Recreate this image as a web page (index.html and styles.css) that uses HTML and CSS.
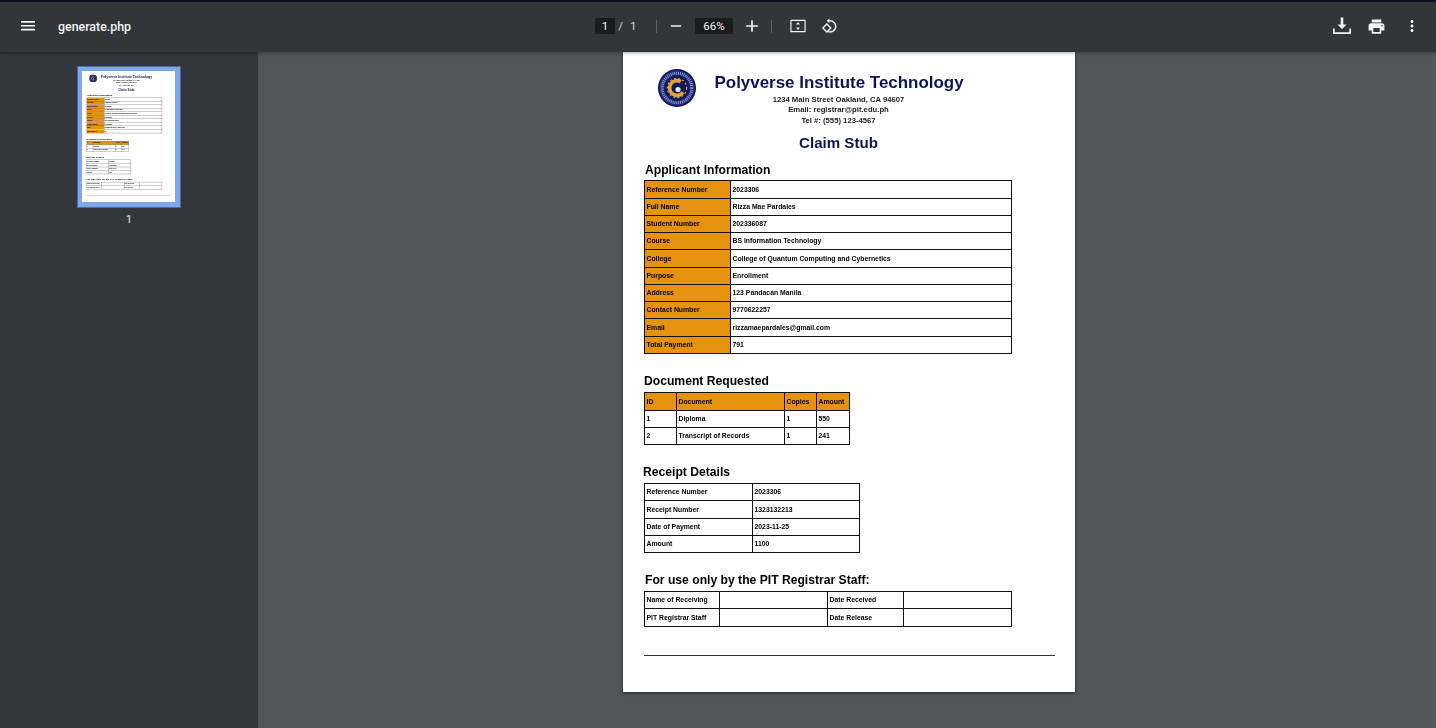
FILE: index.html
```html
<!DOCTYPE html>
<html lang="en">
<head>
<meta charset="utf-8">
<title>generate.php</title>
<link rel="stylesheet" href="styles.css">
</head>
<body>
<svg class="defs" width="0" height="0" aria-hidden="true">
  <symbol id="seal" viewBox="0 0 38 38">
    <circle cx="19" cy="19" r="19" fill="#1c2a78"/>
    <circle cx="19" cy="19" r="18" fill="none" stroke="#0d1650" stroke-width="1"/>
    <circle cx="19" cy="19" r="14.8" fill="none" stroke="#8f97cc" stroke-width="3" stroke-dasharray="1 .9"/>
    <circle cx="19" cy="19" r="12.4" fill="#10185c"/>
    <circle cx="19" cy="19" r="7.4" fill="none" stroke="#e3a33c" stroke-width="3.600" stroke-dasharray="34 13" transform="rotate(35 19 19)"/>
    <circle cx="19" cy="19" r="9.600" fill="none" stroke="#e3a33c" stroke-width="1.200" stroke-dasharray="2 2.200"/>
    <circle cx="20" cy="20.500" r="2.600" fill="#e6e9f5"/>
  </symbol>
</svg>

<header class="toolbar">
  <div class="tb-left">
    <svg class="icon menu" viewBox="0 0 18 18"><path d="M2 13.500h14v-1.700H2zm0-3.900h14V8H2zM2 4v1.700h14V4z"/></svg>
    <span class="filename">generate.php</span>
  </div>
  <div class="tb-center">
    <span class="field page-field">1</span>
    <span class="slash">/</span>
    <span class="total">1</span>
    <span class="sep sep-a"></span>
    <svg class="icon zoom-out" viewBox="0 0 24 24"><path d="M19 13H5v-2h14v2z"/></svg>
    <span class="field zoom-field">66%</span>
    <svg class="icon zoom-in" viewBox="0 0 24 24"><path d="M19 13h-6v6h-2v-6H5v-2h6V5h2v6h6v2z"/></svg>
    <span class="sep sep-b"></span>
    <svg class="icon fit" viewBox="0 0 20 20"><path d="M2.500 3h15c.6 0 1 .4 1 1v12c0 .6-.4 1-1 1h-15c-.6 0-1-.4-1-1V4c0-.6.4-1 1-1zm.3 1.400v11.200h14.400V4.400zM10 5.600l2.200 2.700H7.800zm0 8.800-2.200-2.700h4.400z" fill-rule="evenodd"/></svg>
    <svg class="icon rotate" viewBox="0 0 20 20"><path d="M9.300 1.800v1.700a7 7 0 1 1-1.600 13.500l.5-1.500A5.400 5.400 0 1 0 9.300 5.100v1.800L6.300 4.300zM6.500 6.800l5.500 5.500-5.500 5.400L1 12.300zm0 2.100-3.400 3.400 3.400 3.300 3.400-3.300z" fill-rule="evenodd"/></svg>
  </div>
  <div class="tb-right">
    <svg class="icon download" viewBox="0 0 20 20"><path d="M8.700 1.500h2.600v7h3.200L10 13.200 5.500 8.500h3.200zM1 12.500h1.700v3.800h14.600v-3.800H19v4.500c0 .6-.4 1-1 1H2c-.6 0-1-.4-1-1z"/></svg>
    <svg class="icon print" viewBox="0 0 24 24"><path d="M19 8H5c-1.660 0-3 1.340-3 3v6h4v4h12v-4h4v-6c0-1.660-1.340-3-3-3zm-3 11H8v-5h8v5zm3-7c-.55 0-1-.45-1-1s.45-1 1-1 1 .45 1 1-.45 1-1 1zm-1-9H6v4h12V3z"/></svg>
    <svg class="icon more" viewBox="0 0 24 24"><path d="M12 8c1.100 0 2-.9 2-2s-.9-2-2-2-2 .9-2 2 .9 2 2 2zm0 2c-1.100 0-2 .9-2 2s.9 2 2 2 2-.9 2-2-.9-2-2-2zm0 6c-1.100 0-2 .9-2 2s.9 2 2 2 2-.9 2-2-.9-2-2-2z"/></svg>
  </div>
</header>

<div class="viewer">
  <aside class="sidebar">
    <div class="thumb-frame">
      <div class="thumb-clip">
        <div class="doc doc-thumb">
          <div class="letterhead">
            <svg class="seal"><use href="#seal"/></svg>
            <div class="lh-text">
              <div class="lh-title">Polyverse Institute Technology</div>
              <div class="lh-line">1234 Main Street Oakland, CA 94607</div>
              <div class="lh-line">Email: registrar@pit.edu.ph</div>
              <div class="lh-line">Tel #: (555) 123-4567</div>
              <div class="lh-stub">Claim Stub</div>
            </div>
          </div>
          <h2 class="h-applicant">Applicant Information</h2>
          <table class="tbl t-info">
            <tr><th>Reference Number</th><td>2023306</td></tr>
            <tr><th>Full Name</th><td>Rizza Mae Pardales</td></tr>
            <tr><th>Student Number</th><td>202336087</td></tr>
            <tr><th>Course</th><td>BS Information Technology</td></tr>
            <tr><th>College</th><td>College of Quantum Computing and Cybernetics</td></tr>
            <tr><th>Purpose</th><td>Enrollment</td></tr>
            <tr><th>Address</th><td>123 Pandacan Manila</td></tr>
            <tr><th>Contact Number</th><td>9770622257</td></tr>
            <tr><th>Email</th><td>rizzamaepardales@gmail.com</td></tr>
            <tr><th>Total Payment</th><td>791</td></tr>
          </table>
          <h2 class="h-doc">Document Requested</h2>
          <table class="tbl t-docs">
            <tr><th>ID</th><th>Document</th><th>Copies</th><th>Amount</th></tr>
            <tr><td>1</td><td>Diploma</td><td>1</td><td>550</td></tr>
            <tr><td>2</td><td>Transcript of Records</td><td>1</td><td>241</td></tr>
          </table>
          <h2 class="h-receipt">Receipt Details</h2>
          <table class="tbl t-receipt">
            <tr><td>Reference Number</td><td>2023306</td></tr>
            <tr><td>Receipt Number</td><td>1323132213</td></tr>
            <tr><td>Date of Payment</td><td>2023-11-25</td></tr>
            <tr><td>Amount</td><td>1100</td></tr>
          </table>
          <h2 class="h-staff">For use only by the PIT Registrar Staff:</h2>
          <table class="tbl t-staff">
            <tr><td>Name of Receiving</td><td></td><td>Date Received</td><td></td></tr>
            <tr><td>PIT Registrar Staff</td><td></td><td>Date Release</td><td></td></tr>
          </table>
          <div class="rule"></div>
        </div>
      </div>
    </div>
    <div class="thumb-num">1</div>
  </aside>

  <main class="stage">
    <div class="doc doc-main">
      <div class="letterhead">
        <svg class="seal"><use href="#seal"/></svg>
        <div class="lh-text">
          <div class="lh-title">Polyverse Institute Technology</div>
          <div class="lh-line">1234 Main Street Oakland, CA 94607</div>
          <div class="lh-line">Email: registrar@pit.edu.ph</div>
          <div class="lh-line">Tel #: (555) 123-4567</div>
          <div class="lh-stub">Claim Stub</div>
        </div>
      </div>
      <h2 class="h-applicant">Applicant Information</h2>
      <table class="tbl t-info">
        <tr><th>Reference Number</th><td>2023306</td></tr>
        <tr><th>Full Name</th><td>Rizza Mae Pardales</td></tr>
        <tr><th>Student Number</th><td>202336087</td></tr>
        <tr><th>Course</th><td>BS Information Technology</td></tr>
        <tr><th>College</th><td>College of Quantum Computing and Cybernetics</td></tr>
        <tr><th>Purpose</th><td>Enrollment</td></tr>
        <tr><th>Address</th><td>123 Pandacan Manila</td></tr>
        <tr><th>Contact Number</th><td>9770622257</td></tr>
        <tr><th>Email</th><td>rizzamaepardales@gmail.com</td></tr>
        <tr><th>Total Payment</th><td>791</td></tr>
      </table>
      <h2 class="h-doc">Document Requested</h2>
      <table class="tbl t-docs">
        <tr><th>ID</th><th>Document</th><th>Copies</th><th>Amount</th></tr>
        <tr><td>1</td><td>Diploma</td><td>1</td><td>550</td></tr>
        <tr><td>2</td><td>Transcript of Records</td><td>1</td><td>241</td></tr>
      </table>
      <h2 class="h-receipt">Receipt Details</h2>
      <table class="tbl t-receipt">
        <tr><td>Reference Number</td><td>2023306</td></tr>
        <tr><td>Receipt Number</td><td>1323132213</td></tr>
        <tr><td>Date of Payment</td><td>2023-11-25</td></tr>
        <tr><td>Amount</td><td>1100</td></tr>
      </table>
      <h2 class="h-staff">For use only by the PIT Registrar Staff:</h2>
      <table class="tbl t-staff">
        <tr><td>Name of Receiving</td><td></td><td>Date Received</td><td></td></tr>
        <tr><td>PIT Registrar Staff</td><td></td><td>Date Release</td><td></td></tr>
      </table>
      <div class="rule"></div>
    </div>
  </main>
</div>
</body>
</html>
```
FILE: styles.css
```css
* { box-sizing: border-box; }
html, body { margin: 0; height: 100%; overflow: hidden; }
body { display: flex; flex-direction: column; background: #525659; font-family: Roboto, "Liberation Sans", sans-serif; }
.defs { display: block; height: 0; }

.toolbar {
  flex: 0 0 52px; z-index: 2; display: grid; grid-template-columns: 595px 1fr auto; align-items: center;
  background: #323639; border-top: 2px solid #0e1022; padding-bottom: 2px; box-shadow: 0 1px 3px rgba(0,0,0,.35); color: #f1f3f4;
}
.icon { display: block; fill: #f1f3f4; flex: none; }
.tb-left { display: flex; align-items: center; padding-left: 19px; }
.menu { width: 18px; height: 18px; }
.filename { margin-left: 21px; font-size: 12.400px; font-weight: 500; color: #f1f3f4; }
.tb-center { display: flex; align-items: center; font-size: 11.500px; }
.field { height: 16px; background: #191b1c; display: flex; align-items: center; justify-content: center; }
.page-field { width: 20px; }
.slash { margin-left: 1px; width: 9px; text-align: center; color: #d8dadb; }
.total { margin-left: 5px; width: 6px; color: #d8dadb; }
.sep { width: 1px; height: 13px; background: #5f6366; }
.sep-a { margin-left: 20px; }
.zoom-out { width: 18px; height: 18px; margin-left: 10px; }
.zoom-field { width: 38px; margin-left: 10px; }
.zoom-in { width: 20px; height: 20px; margin-left: 9px; }
.sep-b { margin-left: 9px; }
.fit { width: 18px; height: 18px; margin-left: 17px; }
.rotate { width: 18px; height: 18px; margin-left: 14px; }
.tb-right { display: flex; align-items: center; padding-right: 15px; }
.download { width: 20px; height: 20px; }
.print { width: 19px; height: 19px; margin-left: 15px; }
.more { width: 18px; height: 18px; margin-left: 17px; }

.viewer { flex: 1; min-height: 0; display: flex; }
.sidebar { flex: 0 0 258px; background: #33363a; display: flex; flex-direction: column; align-items: center; padding-top: 14px; }
.thumb-frame { width: 104px; height: 142px; background: #7fa8ec; border: 1px solid #4e6a9c; padding: 4px 5px 5px 4px; }
.thumb-clip { width: 93px; height: 131px; overflow: hidden; background: #fff; }
.doc-thumb { transform: scale(.2058); transform-origin: 0 0; filter: blur(1px); }
.thumb-num { margin-top: 4px; font-size: 11.500px; color: #e4e6e7; }

.stage { flex: 1; min-width: 0; display: flex; justify-content: center; }
.doc {
  flex: none; width: 452px; height: 640px; background: #fff; padding: 17px 20px 0 21px; color: #000;
  font-family: "Liberation Sans", Arial, sans-serif;
}
.doc-main { margin-left: 4px; box-shadow: 0 1px 3px rgba(0,0,0,.55); filter: blur(.25px); }

.letterhead { display: flex; align-items: flex-start; }
.seal { width: 38px; height: 38px; margin-left: 14px; margin-right: 18.500px; flex: none; }
.lh-text { width: 248px; text-align: center; white-space: nowrap; }
.lh-title { margin-top: 3px; margin-bottom: .5px; font-size: 16.950px; line-height: 22px; font-weight: 700; color: #0b1558; }
.lh-line { font-size: 7.700px; line-height: 10.800px; font-weight: 700; color: #222; }
.lh-stub { margin-top: 6px; font-size: 15.100px; line-height: 20px; font-weight: 700; color: #0b1558; }

h2 { margin: 0; font-size: 12.150px; line-height: 15px; font-weight: 700; color: #000; white-space: nowrap; }
.h-applicant { margin-top: 10px; margin-left: 1px; }
.h-doc { margin-top: 20.500px; }
.h-receipt { margin-top: 20px; margin-left: -1px; }
.h-staff { margin-top: 20px; margin-left: 1px; }

.tbl { border-collapse: collapse; table-layout: fixed; margin-top: 3px; font-size: 6.850px; font-weight: 700; }
.h-applicant + .tbl { margin-top: 2.500px; }
.tbl th, .tbl td { border: 1px solid #111; height: 17.250px; padding: 0 1.500px 1px; text-align: left; font-weight: 700; white-space: nowrap; overflow: hidden; }
.tbl th { background: #e5920e; }
.t-info { width: 368px; }
.t-info th { width: 86px; }
.t-docs { width: 206px; }
.t-docs th:nth-child(1) { width: 32px; }
.t-docs th:nth-child(2) { width: 108px; }
.t-docs th:nth-child(3) { width: 32px; }
.t-receipt { width: 216px; }
.t-receipt td:first-child { width: 108px; }
.t-staff { width: 368px; }
.t-staff td:nth-child(1) { width: 75px; }
.t-staff td:nth-child(2) { width: 108px; }
.t-staff td:nth-child(3) { width: 76px; }
.rule { margin-top: 28px; height: 1px; background: #333; }
```
